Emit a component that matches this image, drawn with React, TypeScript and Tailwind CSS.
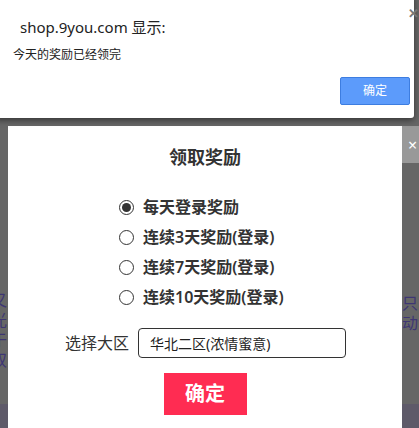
import React from 'react';

const options = ['每天登录奖励', '连续3天奖励(登录)', '连续7天奖励(登录)', '连续10天奖励(登录)'];

const Radio: React.FC<{ checked?: boolean }> = ({ checked }) => (
  <span className="w-[15px] h-[15px] rounded-full border border-[#333] flex items-center justify-center bg-white shrink-0">
    {checked && <span className="w-[9px] h-[9px] rounded-full bg-[#333]" />}
  </span>
);

export default function App() {
  return (
    <div
      className="relative w-[419px] h-[428px] overflow-hidden bg-[#666]"
      style={{ fontFamily: '"Noto Sans", "Noto Sans CJK SC", sans-serif' }}
    >
      {/* page behind the overlay */}
      <div className="flex flex-col h-full">
        <div className="flex-1 flex justify-between text-[16px] leading-[20px] text-[#3e3674]">
          <div className="flex flex-col pt-[290px] -ml-[9px]">
            <span>又</span>
            <span>光</span>
            <span>于</span>
            <span>双</span>
          </div>
          <div className="flex flex-col pt-[293px] -mr-[15px]">
            <span>只能</span>
            <span>动领</span>
          </div>
        </div>
        <div className="h-[24px] bg-[#5e5a69]" />
      </div>

      {/* modal */}
      <div className="absolute left-[8px] top-[126px] w-[394px] h-[310px] bg-white flex flex-col items-center">
        <h2 className="mt-[18px] text-[18px] leading-[26px] font-bold text-[#333]">领取奖励</h2>
        <div className="mt-[27px] flex flex-col gap-[9px] self-start ml-[111px]">
          {options.map((o, i) => (
            <label key={o} className="flex items-center gap-[9px] h-[21px]">
              <Radio checked={i === 0} />
              <span className="text-[16px] font-semibold text-[#333] leading-[21px]">{o}</span>
            </label>
          ))}
        </div>
        <div className="mt-[20px] flex items-center self-start ml-[57px] gap-[9px]">
          <span className="text-[16px] text-[#333]">选择大区</span>
          <div className="w-[208px] h-[30px] border border-[#333] rounded-[4px] flex items-center pl-[11px] text-[14px] text-[#222]">
            华北二区(浓情蜜意)
          </div>
        </div>
        <button className="mt-[15px] w-[83px] h-[42px] bg-[#ff2c52] text-white text-[20px] font-bold">确定</button>
      </div>

      {/* modal close */}
      <div className="absolute left-[402px] top-[126px] w-[17px] h-[37px] bg-[#999] flex items-center pl-[6px] text-white text-[16px]">
        ×
      </div>

      {/* browser alert */}
      <div className="absolute -left-[6px] -top-[6px] w-[420px] h-[124px] bg-white rounded-[3px] shadow-[0_2px_6px_rgba(0,0,0,0.5)]">
        <div className="relative pl-[26px] pt-[23px]">
          <div className="text-[15px] leading-[20px] text-[#222]">shop.9you.com 显示:</div>
          <span className="absolute right-[-5px] top-[10px] text-[13px] font-bold text-[#777]">✕</span>
        </div>
        <div className="mt-[10px] pl-[19px] text-[12px] leading-[16px] text-[#222]">今天的奖励已经领完</div>
        <div className="flex justify-end pr-[4px] mt-[14px]">
          <button className="w-[70px] h-[28px] bg-[#5c9bfb] border border-[#3d7de0] rounded-[2px] text-white text-[12px]">
            确定
          </button>
        </div>
      </div>
    </div>
  );
}
